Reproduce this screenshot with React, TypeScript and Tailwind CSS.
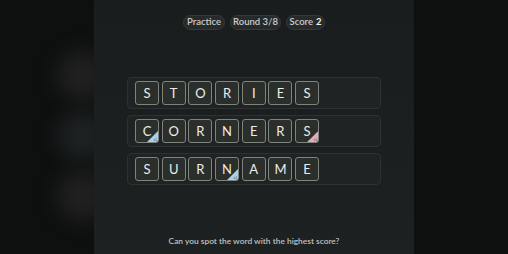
import React from "react";

type Tile = { l: string; mark?: "blue" | "pink"; label?: string };

const words: Tile[][] = [
    [{ l: "S" }, { l: "T" }, { l: "O" }, { l: "R" }, { l: "I" }, { l: "E" }, { l: "S" }],
    [
        { l: "C", mark: "blue", label: "x2" },
        { l: "O" },
        { l: "R" },
        { l: "N" },
        { l: "E" },
        { l: "R" },
        { l: "S", mark: "pink", label: "x3" },
    ],
    [{ l: "S" }, { l: "U" }, { l: "R" }, { l: "N", mark: "blue", label: "x2" }, { l: "A" }, { l: "M" }, { l: "E" }],
];

function LetterTile({ tile }: { tile: Tile }) {
    return (
        <div className="relative flex h-[24px] w-[24px] shrink-0 items-center justify-center overflow-hidden rounded-[3px] border-[1.5px] border-[#7f857d] bg-[#2b2f2c] text-[13px] text-[#ececea]">
            <span className="leading-none">{tile.l}</span>
            {tile.mark && (
                <div
                    className={`absolute right-0 bottom-0 h-[11px] w-[11px] [clip-path:polygon(100%_0,100%_100%,0_100%)] ${
                        tile.mark === "blue" ? "bg-[#a9cfea]" : "bg-[#e4a9bb]"
                    }`}
                >
                    <span className="absolute right-[1px] bottom-[0px] text-[3px] leading-none text-[#4a5560]">
                        {tile.label}
                    </span>
                </div>
            )}
        </div>
    );
}

export default function App() {
    return (
        <div
            className="relative flex h-[254px] w-[508px] overflow-hidden bg-[#0e1010]"
            style={{ fontFamily: "Lato, 'Open Sans', sans-serif" }}
        >
            {/* Side blur blobs */}
            <div className="absolute top-[52px] left-[58px] h-[48px] w-[48px] rounded-full bg-[#2a2827] opacity-70 blur-[10px]" />
            <div className="absolute top-[112px] left-[58px] h-[48px] w-[48px] rounded-full bg-[#262a2b] opacity-70 blur-[10px]" />
            <div className="absolute top-[172px] left-[58px] h-[48px] w-[48px] rounded-full bg-[#2a2827] opacity-70 blur-[10px]" />

            <div className="w-[94px] shrink-0" />

            {/* Center panel */}
            <div className="relative z-10 flex w-[320px] shrink-0 flex-col items-center bg-gradient-to-b from-[#1a1d1e] to-[#1e2122]">
                {/* Pills */}
                <div className="mt-[15px] flex items-center gap-[5px] text-[9.5px] font-semibold text-[#c9cbcb]">
                    <span className="flex h-[15px] w-[42px] items-center justify-center rounded-full border border-[#35393a] bg-[#272a2b]">
                        Practice
                    </span>
                    <span className="flex h-[15px] w-[51px] items-center justify-center rounded-full border border-[#35393a] bg-[#272a2b]">
                        Round 3/8
                    </span>
                    <span className="flex h-[15px] w-[39px] items-center justify-center gap-[3px] rounded-full border border-[#35393a] bg-[#272a2b]">
                        Score <span className="font-bold text-[#f2f2f2]">2</span>
                    </span>
                </div>

                {/* Word rows */}
                <div className="mt-[47px] flex w-[254px] flex-col gap-[6px]">
                    {words.map((w, i) => (
                        <div
                            key={i}
                            className="flex h-[32px] items-center gap-[2.7px] rounded-[4px] border border-[#2d3132] bg-[#202324] px-[7px]"
                        >
                            {w.map((t, j) => (
                                <LetterTile key={j} tile={t} />
                            ))}
                        </div>
                    ))}
                </div>

                <p className="mt-auto mb-[7px] text-[8.4px] leading-[12px] font-semibold text-[#bfc1c1]">
                    Can you spot the word with the highest score?
                </p>
            </div>

            <div className="flex-1" />
        </div>
    );
}
